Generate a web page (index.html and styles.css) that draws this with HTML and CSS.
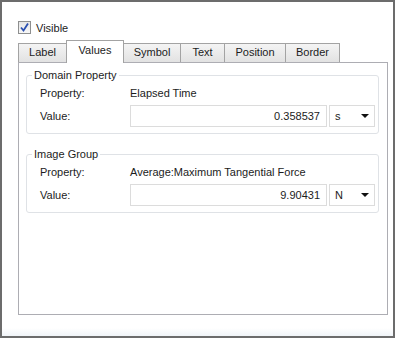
FILE: index.html
```html
<!DOCTYPE html>
<html>
<head>
  <meta charset="utf-8">
  <title>Properties</title>
  <link rel="stylesheet" href="styles.css">
</head>
<body>
  <div class="frame">
    <div class="visible-row">
      <span class="check">
        <svg width="11" height="11" viewBox="0 0 11 11"><path d="M2 5.5 L4.5 8.5 L9 1.5" fill="none" stroke="#2a4fb0" stroke-width="1.8"/></svg>
      </span>
      <span>Visible</span>
    </div>

    <div class="tabs">
      <div class="tab w-label">Label</div>
      <div class="tab tab-on w-values">Values</div>
      <div class="tab w-symbol">Symbol</div>
      <div class="tab w-text">Text</div>
      <div class="tab w-position">Position</div>
      <div class="tab w-border">Border</div>
    </div>

    <div class="panel">
      <fieldset class="group">
        <legend>Domain Property</legend>
        <div class="row">
          <span class="lbl">Property:</span>
          <span>Elapsed Time</span>
        </div>
        <div class="row">
          <span class="lbl">Value:</span>
          <span class="field">0.358537</span>
          <span class="combo">s<i class="arrow"></i></span>
        </div>
      </fieldset>

      <fieldset class="group">
        <legend>Image Group</legend>
        <div class="row">
          <span class="lbl">Property:</span>
          <span>Average:Maximum Tangential Force</span>
        </div>
        <div class="row">
          <span class="lbl">Value:</span>
          <span class="field">9.90431</span>
          <span class="combo">N<i class="arrow"></i></span>
        </div>
      </fieldset>
    </div>
  </div>
</body>
</html>
```

FILE: styles.css
```css
body {
  margin: 0;
  background: #ffffff;
  font-family: "Liberation Sans", Arial, sans-serif;
  font-size: 11px;
  color: #1c1c1c;
}

.frame {
  box-sizing: border-box;
  width: 395px;
  height: 338px;
  border: 2px solid #6c6c6c;
  background: linear-gradient(to bottom, #ffffff 0, #ffffff 326px, #f0f4f8 334px);
  padding: 19px 5px 0 16px;
}

.visible-row {
  display: flex;
  align-items: center;
  gap: 5px;
  height: 13px;
}

.check {
  box-sizing: border-box;
  width: 13px;
  height: 13px;
  border: 1px solid #8e8f8f;
  background: linear-gradient(#e6e6e6, #f7f7f7);
  display: flex;
  align-items: center;
  justify-content: center;
}

.tabs {
  display: flex;
  align-items: flex-end;
  height: 22px;
  margin-top: 6px;
  position: relative;
  z-index: 1;
}

.tab {
  box-sizing: border-box;
  height: 19px;
  border: 1px solid #a3a3a3;
  border-bottom: none;
  margin-right: -1px;
  background: linear-gradient(#f4f4f4, #e2e2e2);
  text-align: center;
  line-height: 17px;
}

.tab-on {
  height: 23px;
  margin-bottom: -1px;
  background: #ffffff;
  line-height: 18px;
}

.w-label { width: 49px; }
.w-values { width: 58px; }
.w-symbol { width: 58px; }
.w-text { width: 45px; }
.w-position { width: 62px; }
.w-border { width: 55px; }

.panel {
  box-sizing: border-box;
  height: 253px;
  border: 1px solid #adadb3;
  background: #ffffff;
  padding: 5px 8px 0 7px;
}

.group {
  margin: 0 0 13px 0;
  padding: 3px 3px 6px 13px;
  border: 1px solid #dfe2e6;
  border-radius: 3px;
}

.group legend {
  padding: 0 2px;
  margin-left: -8px;
  line-height: 14px;
}

.row {
  display: flex;
  align-items: center;
  height: 13px;
  margin-top: 1px;
}

.row + .row {
  height: 22px;
  margin-top: 6px;
}

.lbl {
  width: 90px;
}

.field {
  box-sizing: border-box;
  width: 197px;
  height: 22px;
  border: 1px solid #dcdcdc;
  text-align: right;
  line-height: 20px;
  padding-right: 6px;
}

.combo {
  box-sizing: border-box;
  width: 46px;
  height: 22px;
  margin-left: 2px;
  border: 1px solid #dcdcdc;
  padding-left: 5px;
  line-height: 20px;
  display: flex;
  justify-content: space-between;
  align-items: center;
}

.arrow {
  width: 0;
  height: 0;
  margin-right: 5px;
  border-left: 4px solid transparent;
  border-right: 4px solid transparent;
  border-top: 4px solid #111111;
}
```
